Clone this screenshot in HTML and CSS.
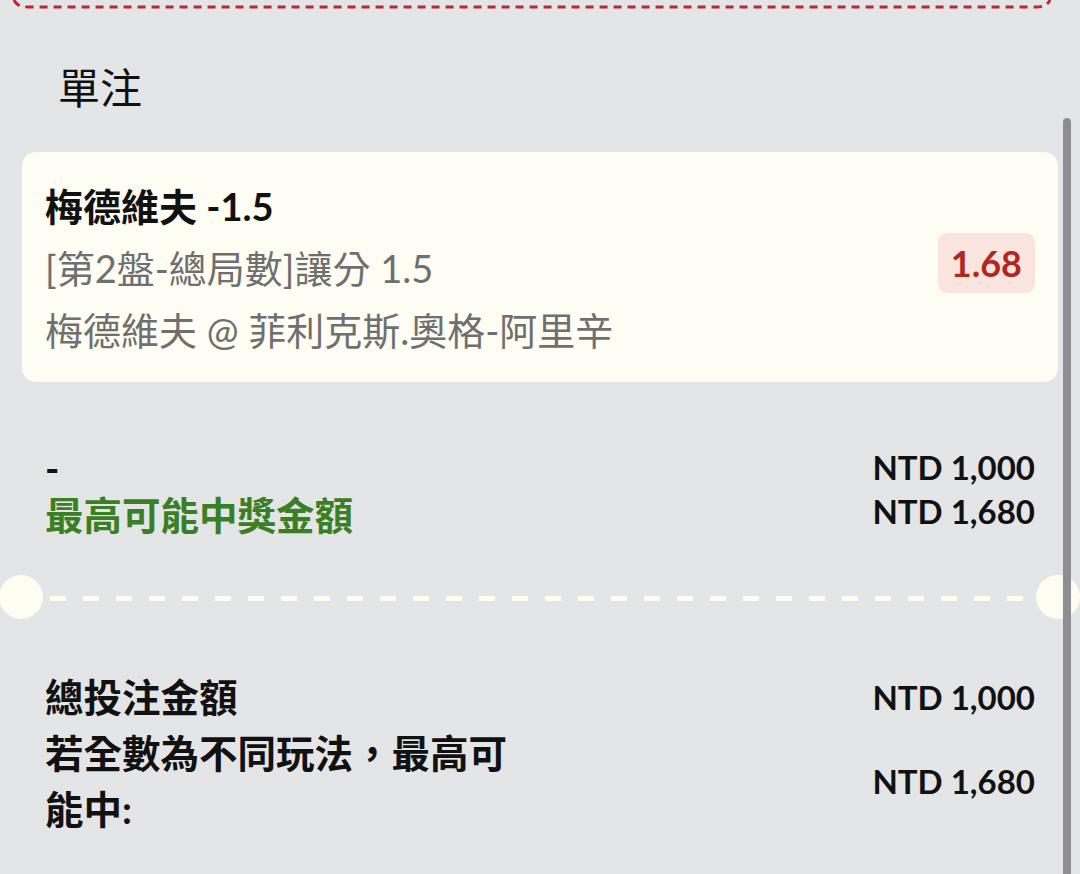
FILE: index.html
```html
<!DOCTYPE html>
<html lang="zh-Hant">
<head>
<meta charset="utf-8">
<link rel="stylesheet" href="styles.css">
</head>
<body>
<div class="page">
  <svg class="top-border" width="1080" height="12" viewBox="0 0 1080 12">
    <path d="M14 0 Q17 7 28 7 L1036 7 Q1047 7 1050 0" fill="none" stroke="#c0272d" stroke-width="3" stroke-dasharray="8 6"/>
  </svg>
  <div class="title">單注</div>
  <div class="card">
    <div class="info">
      <div class="bet-name">梅德維夫 -1.5</div>
      <div class="bet-line">[第2盤-總局數]讓分 1.5</div>
      <div class="bet-line">梅德維夫 @ 菲利克斯.奧格-阿里辛</div>
    </div>
    <div class="odds">1.68</div>
  </div>
  <div class="summary">
    <div class="labels">
      <div class="label">-</div>
      <div class="label green">最高可能中獎金額</div>
    </div>
    <div class="amounts">
      <div class="amount">NTD 1,000</div>
      <div class="amount">NTD 1,680</div>
    </div>
  </div>
  <div class="divider">
    <div class="notch notch-left"></div>
    <div class="dashes"></div>
    <div class="notch notch-right"></div>
  </div>
  <div class="totals">
    <div class="label">總投注金額</div>
    <div class="amount">NTD 1,000</div>
    <div class="label wrap">若全數為不同玩法，最高可能中:</div>
    <div class="amount">NTD 1,680</div>
  </div>
  <div class="scrollbar"></div>
</div>
</body>
</html>
```

FILE: styles.css
```css
html, body {
  margin: 0;
  padding: 0;
  overflow: hidden;
}
body {
  background: #e4e5e7;
  font-family: Lato, "Noto Sans CJK TC", sans-serif;
  color: #111111;
  width: 1080px;
  height: 874px;
}
.page {
  position: relative;
  width: 1080px;
  height: 874px;
  overflow: hidden;
}
.top-border {
  display: block;
}
.title {
  margin: 51px 0 39px 58px;
  font-size: 42px;
  line-height: 50px;
  font-weight: 400;
  color: #111;
}
.card {
  margin: 0 22px;
  background: #fefdf4;
  border-radius: 14px;
  padding: 23px 23px 21px 23px;
  display: flex;
  align-items: center;
  justify-content: space-between;
}
.bet-name {
  font-size: 38px;
  font-weight: 700;
  line-height: 62px;
  color: #111;
}
.bet-line {
  font-size: 38px;
  line-height: 62px;
  color: #6f6f6f;
}
.odds {
  background: #f9e5de;
  color: #b2261f;
  font-weight: 700;
  font-size: 36px;
  height: 60px;
  line-height: 60px;
  padding: 0 13px;
  border-radius: 9px;
  margin-top: -10px;
}
.summary {
  margin: 63px 45px 0 45px;
  display: flex;
  justify-content: space-between;
  align-items: flex-start;
}
.labels .label {
  line-height: 47px;
}
.amounts .amount {
  line-height: 44px;
}
.label {
  font-size: 38.5px;
  font-weight: 700;
  line-height: 46px;
  color: #111;
}
.green {
  color: #3a7f24;
}
.amount {
  font-size: 33px;
  font-weight: 700;
  text-align: right;
  color: #111;
}
.divider {
  margin-top: 36px;
  display: flex;
  align-items: center;
  width: 1080px;
}
.notch {
  flex: 0 0 44px;
  width: 44px;
  height: 44px;
  border-radius: 50%;
  background: #fefdf2;
}
.notch-left {
  margin-left: -1px;
}
.dashes {
  flex: 1;
  height: 5px;
  margin: 2px 6px 0 7px;
  background: repeating-linear-gradient(to right, #fefdf2 0 16px, transparent 16px 33px);
}
.totals {
  margin: 50px 45px 0 45px;
  display: grid;
  grid-template-columns: 1fr auto;
  align-items: center;
}
.totals .label {
  line-height: 56px;
}
.wrap {
  max-width: 485px;
}
.scrollbar {
  position: absolute;
  left: 1063px;
  top: 118px;
  width: 8px;
  height: 800px;
  border-radius: 4px;
  background: #8e8e92;
}
```
